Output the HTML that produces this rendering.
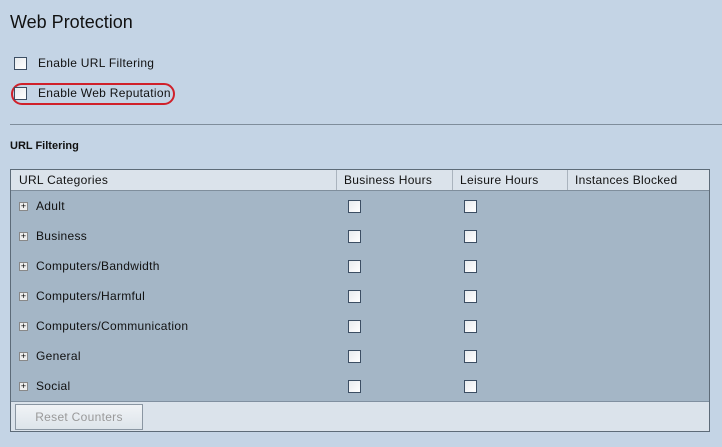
<!DOCTYPE html>
<html><head><style>
body{margin:0;width:722px;height:447px;background:#c4d4e5;font-family:"Liberation Sans",sans-serif;font-size:12px;letter-spacing:0.3px;color:#111;position:relative;overflow:hidden}
.a{position:absolute}
.cb{position:absolute;width:11px;height:11px;border:1px solid #3c4e63;background:linear-gradient(135deg,#e8ebee,#fff)}
.plus{position:absolute;width:7px;height:7px;border:1px solid #888;background:#eee;font-size:9px;line-height:7px;text-align:center;color:#000;letter-spacing:0}
</style></head><body>
<div class="a" style="left:10px;top:12px;font-size:18px;letter-spacing:0">Web Protection</div>
<div class="cb" style="left:14px;top:57px"></div>
<div class="a" style="left:38px;top:56px">Enable URL Filtering</div>
<div class="a" style="left:11px;top:83px;width:160px;height:18px;border:2px solid #d0202a;border-radius:11px"></div>
<div class="cb" style="left:14px;top:87px"></div>
<div class="a" style="left:38px;top:86px">Enable Web Reputation</div>
<div class="a" style="left:10px;top:124px;width:712px;height:1px;background:#7f8d9b"></div>
<div class="a" style="left:10px;top:140px;font-weight:bold;font-size:11px;letter-spacing:0">URL Filtering</div>
<div class="a" style="left:10px;top:169px;width:698px;height:261px;border:1px solid #5d6b78;background:#a4b6c6"></div>
<div class="a" style="left:11px;top:170px;width:698px;height:20px;background:#dbe3eb;border-bottom:1px solid #7f8e9c"></div>
<div class="a" style="left:336px;top:170px;width:1px;height:20px;background:#aab4be"></div>
<div class="a" style="left:452px;top:170px;width:1px;height:20px;background:#aab4be"></div>
<div class="a" style="left:567px;top:170px;width:1px;height:20px;background:#aab4be"></div>
<div class="a" style="left:19px;top:173px">URL Categories</div>
<div class="a" style="left:344px;top:173px">Business Hours</div>
<div class="a" style="left:460px;top:173px">Leisure Hours</div>
<div class="a" style="left:575px;top:173px">Instances Blocked</div>
<div class="a" style="left:11px;top:401px;width:698px;height:29px;background:#dbe3eb;border-top:1px solid #8090a0"></div>
<div class="a" style="left:15px;top:404px;width:126px;height:24px;border:1px solid #8a96a2;background:linear-gradient(#f0f3f6,#dde4ea);color:#999;text-align:center;line-height:24px">Reset Counters</div>
<div id="rows"></div>
<script>
var n=["Adult","Business","Computers/Bandwidth","Computers/Harmful","Computers/Communication","General","Social"],h="";
n.forEach(function(t,i){var y=200+i*30;
h+='<div class="plus" style="left:19px;top:'+(y+2)+'px">+</div><div class="a" style="left:36px;top:'+(y-1)+'px">'+t+'</div><div class="cb" style="left:348px;top:'+y+'px"></div><div class="cb" style="left:464px;top:'+y+'px"></div>';});
document.getElementById("rows").innerHTML=h;
</script>
</body></html>
